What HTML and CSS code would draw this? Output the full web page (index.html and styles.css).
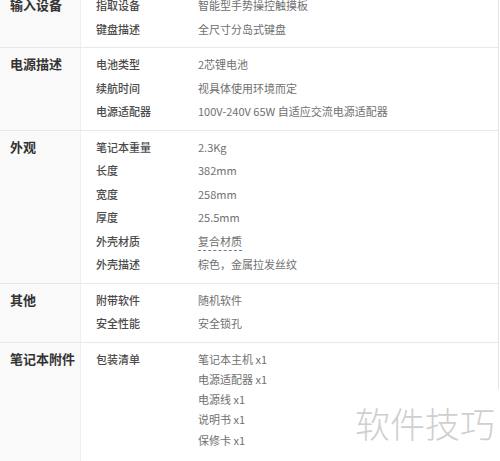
FILE: index.html
```html
<!DOCTYPE html>
<html lang="zh-CN">
<head>
<meta charset="utf-8">
<link rel="stylesheet" href="styles.css">
</head>
<body>
<div class="page">
  <div class="specs">
    <section class="group">
      <h3 class="group-title">输入设备</h3>
      <dl class="items">
        <div class="item"><dt>指取设备</dt><dd>智能型手势操控触摸板</dd></div>
        <div class="item"><dt>键盘描述</dt><dd>全尺寸分岛式键盘</dd></div>
      </dl>
    </section>
    <section class="group">
      <h3 class="group-title">电源描述</h3>
      <dl class="items">
        <div class="item"><dt>电池类型</dt><dd>2芯锂电池</dd></div>
        <div class="item"><dt>续航时间</dt><dd>视具体使用环境而定</dd></div>
        <div class="item"><dt>电源适配器</dt><dd>100V-240V 65W 自适应交流电源适配器</dd></div>
      </dl>
    </section>
    <section class="group">
      <h3 class="group-title">外观</h3>
      <dl class="items">
        <div class="item"><dt>笔记本重量</dt><dd>2.3Kg</dd></div>
        <div class="item"><dt>长度</dt><dd>382mm</dd></div>
        <div class="item"><dt>宽度</dt><dd>258mm</dd></div>
        <div class="item"><dt>厚度</dt><dd>25.5mm</dd></div>
        <div class="item"><dt>外壳材质</dt><dd><span class="term">复合材质</span></dd></div>
        <div class="item"><dt>外壳描述</dt><dd>棕色，金属拉发丝纹</dd></div>
      </dl>
    </section>
    <section class="group">
      <h3 class="group-title">其他</h3>
      <dl class="items">
        <div class="item"><dt>附带软件</dt><dd>随机软件</dd></div>
        <div class="item"><dt>安全性能</dt><dd>安全锁孔</dd></div>
      </dl>
    </section>
    <section class="group">
      <h3 class="group-title">笔记本附件</h3>
      <dl class="items">
        <div class="item"><dt>包装清单</dt>
          <dd class="list">
            <span>笔记本主机 x1</span>
            <span>电源适配器 x1</span>
            <span>电源线 x1</span>
            <span>说明书 x1</span>
            <span>保修卡 x1</span>
          </dd>
        </div>
      </dl>
    </section>
    <section class="group group-next">
      <div class="group-title"></div>
      <div class="items"></div>
    </section>
  </div>
  <div class="watermark">软件技巧</div>
</div>
</body>
</html>
```
FILE: styles.css
```css
html, body {
  margin: 0;
  padding: 0;
  background: #fff;
  overflow: hidden;
}
body {
  font-family: "Noto Sans CJK SC", "Noto Sans", sans-serif;
  height: 461px;
}
.page {
  position: relative;
  height: 461px;
  overflow: hidden;
}
.specs {
  margin-top: -11px;
  width: 498px;
  border-right: 1px solid #e4e4e4;
}
.group {
  display: grid;
  grid-template-columns: 81px 1fr;
  border-bottom: 1px solid #e8e8e8;
}
.group-title {
  margin: 0;
  box-sizing: border-box;
  background: #f9f9f9;
  border-right: 1px solid #efefef;
  padding: 7px 0 0 10px;
  font-size: 13px;
  line-height: 18px;
  font-weight: bold;
  color: #333;
}
.items {
  margin: 0;
  padding: 5px 0 6px 15px;
}
.item {
  display: flex;
  font-size: 11px;
  line-height: 23.5px;
}
.item dt {
  width: 102px;
  flex: none;
  color: #4a4a4a;
  font-weight: 500;
}
.item dd {
  margin: 0;
  color: #707070;
}
.term {
  border-bottom: 1px dashed #6b7f99;
  padding-bottom: 1px;
}
.list {
  display: flex;
  flex-direction: column;
  line-height: 20.25px;
  padding: 1px 0 8px;
}
.group-next {
  height: 20px;
}
.watermark {
  position: absolute;
  right: 0;
  bottom: 0;
  width: 148px;
  height: 72px;
  background: #fff;
  color: #cfcfcf;
  font-family: "Noto Sans CJK SC", sans-serif;
  font-weight: 300;
  font-size: 35px;
  line-height: 40px;
  padding-top: 14px;
  box-sizing: border-box;
  text-align: right;
  padding-right: 5px;
  letter-spacing: 0;
}
```
